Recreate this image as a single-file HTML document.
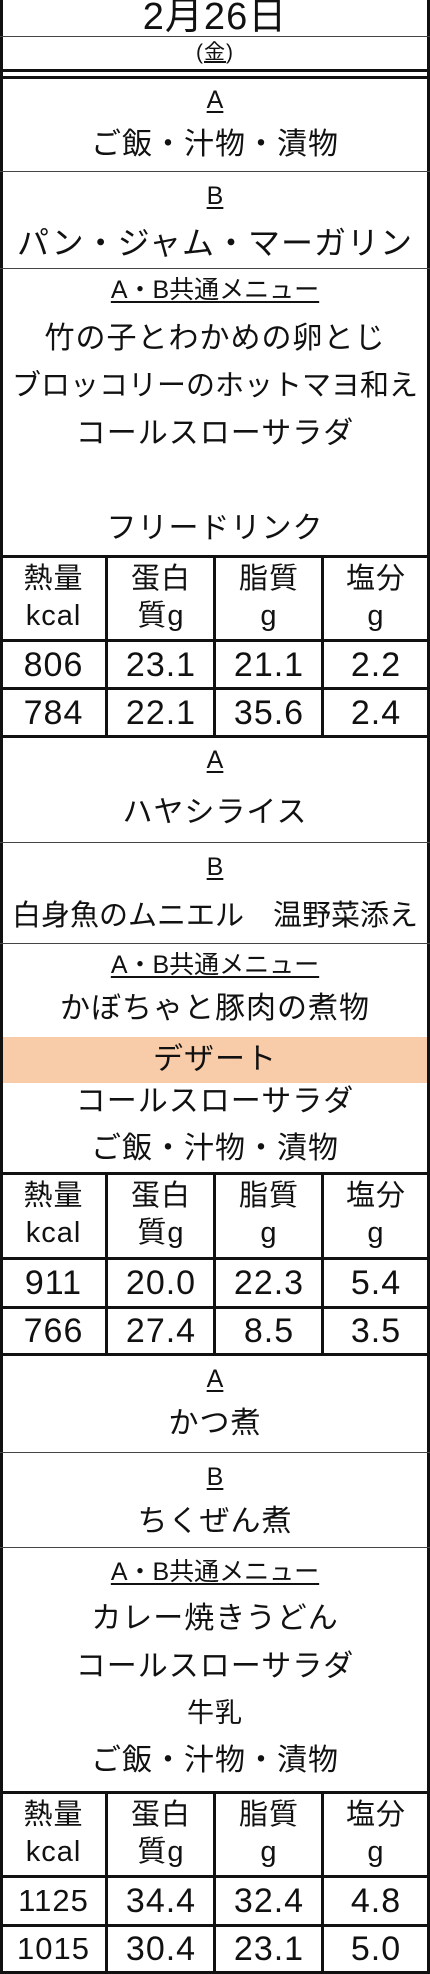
<!DOCTYPE html>
<html><head><meta charset="utf-8"><style>
*{margin:0;padding:0;box-sizing:border-box}
body{width:430px;height:1974px;position:relative;background:#fff;overflow:hidden;font-family:"Liberation Sans","Noto Sans CJK JP",sans-serif;color:#111}
.t{position:absolute;left:0;width:430px;text-align:center;height:40px;line-height:40px;font-size:30px;white-space:nowrap;letter-spacing:1px}
.u{font-size:25px;letter-spacing:0}.u span{text-decoration:underline;text-decoration-thickness:2px;text-underline-offset:3px}
.h{position:absolute;left:0;width:430px;height:1px;background:#444}
.hb{position:absolute;left:0;width:430px;height:3px;background:#111}
.v{position:absolute;width:3px;background:#111}
.c{position:absolute;text-align:center;white-space:nowrap;letter-spacing:1px}
.hd{font-size:29px;line-height:37px}
.n{font-size:34px;line-height:46px}
</style></head><body>
<div class="v" style="left:0;top:0;height:1974px"></div>
<div class="v" style="left:427px;top:0;height:1974px"></div>

<div class="t" style="top:-3px;font-size:38px">2月26日</div>
<div class="h" style="top:36px"></div>
<div class="t" style="top:33px;font-size:21px">(<span style="text-decoration:underline">金</span>)</div>
<div class="hb" style="top:69px"></div>
<div class="hb" style="top:76px"></div>

<div class="t u" style="top:80px"><span>A</span></div>
<div class="t" style="top:125px">ご飯・汁物・漬物</div>
<div class="h" style="top:171px"></div>
<div class="t u" style="top:176px"><span>B</span></div>
<div class="t" style="top:223px;font-size:32px">パン・ジャム・マーガリン</div>
<div class="h" style="top:268px"></div>
<div class="t u" style="top:270px"><span>A・B共通メニュー</span></div>
<div class="t" style="top:319px">竹の子とわかめの卵とじ</div>
<div class="t" style="top:366px;font-size:29px;letter-spacing:0">ブロッコリーのホットマヨ和え</div>
<div class="t" style="top:414px">コールスローサラダ</div>
<div class="t" style="top:509px">フリードリンク</div>

<!-- table 1 -->
<div class="hb" style="top:555px"></div>
<div class="hb" style="top:639px"></div>
<div class="hb" style="top:687px"></div>
<div class="hb" style="top:735px"></div>
<div class="v" style="left:105px;top:555px;height:182px"></div>
<div class="v" style="left:213px;top:555px;height:182px"></div>
<div class="v" style="left:321px;top:555px;height:182px"></div>
<div class="c hd" style="left:0;width:107px;top:561px">熱量<br>kcal</div>
<div class="c hd" style="left:107px;width:108px;top:561px">蛋白<br>質g</div>
<div class="c hd" style="left:215px;width:108px;top:561px">脂質<br>g</div>
<div class="c hd" style="left:323px;width:106px;top:561px">塩分<br>g</div>
<div class="c n" style="left:0;width:107px;top:642px">806</div>
<div class="c n" style="left:107px;width:108px;top:642px">23.1</div>
<div class="c n" style="left:215px;width:108px;top:642px">21.1</div>
<div class="c n" style="left:323px;width:106px;top:642px">2.2</div>
<div class="c n" style="left:0;width:107px;top:690px">784</div>
<div class="c n" style="left:107px;width:108px;top:690px">22.1</div>
<div class="c n" style="left:215px;width:108px;top:690px">35.6</div>
<div class="c n" style="left:323px;width:106px;top:690px">2.4</div>

<div class="t u" style="top:740px"><span>A</span></div>
<div class="t" style="top:793px">ハヤシライス</div>
<div class="h" style="top:842px"></div>
<div class="t u" style="top:847px"><span>B</span></div>
<div class="t" style="top:896px;font-size:29px;letter-spacing:0">白身魚のムニエル　温野菜添え</div>
<div class="h" style="top:943px"></div>
<div class="t u" style="top:945px"><span>A・B共通メニュー</span></div>
<div class="t" style="top:989px">かぼちゃと豚肉の煮物</div>
<div style="position:absolute;left:3px;width:424px;top:1037px;height:46px;background:#f8cca8"></div>
<div class="t" style="top:1040px">デザート</div>
<div class="t" style="top:1082px">コールスローサラダ</div>
<div class="t" style="top:1129px">ご飯・汁物・漬物</div>

<!-- table 2 -->
<div class="hb" style="top:1172px"></div>
<div class="hb" style="top:1257px"></div>
<div class="hb" style="top:1306px"></div>
<div class="hb" style="top:1353px"></div>
<div class="v" style="left:105px;top:1172px;height:184px"></div>
<div class="v" style="left:213px;top:1172px;height:184px"></div>
<div class="v" style="left:321px;top:1172px;height:184px"></div>
<div class="c hd" style="left:0;width:107px;top:1178px">熱量<br>kcal</div>
<div class="c hd" style="left:107px;width:108px;top:1178px">蛋白<br>質g</div>
<div class="c hd" style="left:215px;width:108px;top:1178px">脂質<br>g</div>
<div class="c hd" style="left:323px;width:106px;top:1178px">塩分<br>g</div>
<div class="c n" style="left:0;width:107px;top:1260px">911</div>
<div class="c n" style="left:107px;width:108px;top:1260px">20.0</div>
<div class="c n" style="left:215px;width:108px;top:1260px">22.3</div>
<div class="c n" style="left:323px;width:106px;top:1260px">5.4</div>
<div class="c n" style="left:0;width:107px;top:1308px">766</div>
<div class="c n" style="left:107px;width:108px;top:1308px">27.4</div>
<div class="c n" style="left:215px;width:108px;top:1308px">8.5</div>
<div class="c n" style="left:323px;width:106px;top:1308px">3.5</div>

<div class="t u" style="top:1359px"><span>A</span></div>
<div class="t" style="top:1404px">かつ煮</div>
<div class="h" style="top:1452px"></div>
<div class="t u" style="top:1457px"><span>B</span></div>
<div class="t" style="top:1502px">ちくぜん煮</div>
<div class="h" style="top:1547px"></div>
<div class="t u" style="top:1552px"><span>A・B共通メニュー</span></div>
<div class="t" style="top:1599px">カレー焼きうどん</div>
<div class="t" style="top:1647px">コールスローサラダ</div>
<div class="t" style="top:1693px;font-size:27px">牛乳</div>
<div class="t" style="top:1741px">ご飯・汁物・漬物</div>

<!-- table 3 -->
<div class="hb" style="top:1791px"></div>
<div class="hb" style="top:1875px"></div>
<div class="hb" style="top:1924px"></div>
<div class="hb" style="top:1971px"></div>
<div class="v" style="left:105px;top:1791px;height:183px"></div>
<div class="v" style="left:213px;top:1791px;height:183px"></div>
<div class="v" style="left:321px;top:1791px;height:183px"></div>
<div class="c hd" style="left:0;width:107px;top:1797px">熱量<br>kcal</div>
<div class="c hd" style="left:107px;width:108px;top:1797px">蛋白<br>質g</div>
<div class="c hd" style="left:215px;width:108px;top:1797px">脂質<br>g</div>
<div class="c hd" style="left:323px;width:106px;top:1797px">塩分<br>g</div>
<div class="c n" style="left:0;width:107px;top:1878px;font-size:31px">1125</div>
<div class="c n" style="left:107px;width:108px;top:1878px">34.4</div>
<div class="c n" style="left:215px;width:108px;top:1878px">32.4</div>
<div class="c n" style="left:323px;width:106px;top:1878px">4.8</div>
<div class="c n" style="left:0;width:107px;top:1926px;font-size:31px">1015</div>
<div class="c n" style="left:107px;width:108px;top:1926px">30.4</div>
<div class="c n" style="left:215px;width:108px;top:1926px">23.1</div>
<div class="c n" style="left:323px;width:106px;top:1926px">5.0</div>
</body></html>
